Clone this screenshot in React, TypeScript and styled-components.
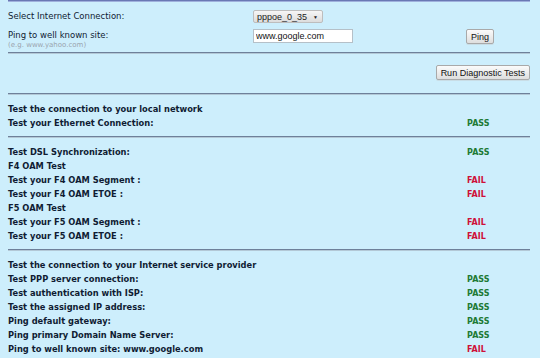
import styled, { createGlobalStyle } from "styled-components";

const GlobalStyle = createGlobalStyle`
  html, body {
    margin: 0;
    padding: 0;
    background: #cdeefc;
  }
  body {
    font-family: "DejaVu Sans", Verdana, sans-serif;
    color: #101c33;
  }
`;

type Status = "PASS" | "FAIL";

interface TestRow {
  label: string;
  status?: Status;
}

const groups: TestRow[][] = [
  [
    { label: "Test the connection to your local network" },
    { label: "Test your Ethernet Connection:", status: "PASS" },
  ],
  [
    { label: "Test DSL Synchronization:", status: "PASS" },
    { label: "F4 OAM Test" },
    { label: "Test your F4 OAM Segment :", status: "FAIL" },
    { label: "Test your F4 OAM ETOE :", status: "FAIL" },
    { label: "F5 OAM Test" },
    { label: "Test your F5 OAM Segment :", status: "FAIL" },
    { label: "Test your F5 OAM ETOE :", status: "FAIL" },
  ],
  [
    { label: "Test the connection to your Internet service provider" },
    { label: "Test PPP server connection:", status: "PASS" },
    { label: "Test authentication with ISP:", status: "PASS" },
    { label: "Test the assigned IP address:", status: "PASS" },
    { label: "Ping default gateway:", status: "PASS" },
    { label: "Ping primary Domain Name Server:", status: "PASS" },
    { label: "Ping to well known site: www.google.com", status: "FAIL" },
  ],
];

export default function App() {
  return (
    <>
      <GlobalStyle />
      <Page>
        <Rule $tone="top" />
        <Settings>
          <FieldLabel>Select Internet Connection:</FieldLabel>
          <SelectBox>
            pppoe_0_35
            <Caret>▼</Caret>
          </SelectBox>
          <span />
          <FieldLabel>
            Ping to well known site:
            <Hint>(e.g. www.yahoo.com)</Hint>
          </FieldLabel>
          <TextInput defaultValue="www.google.com" />
          <Button>Ping</Button>
        </Settings>
        <Rule />
        <Actions>
          <Button>Run Diagnostic Tests</Button>
        </Actions>
        <Rule />
        {groups.map((rows, gi) => (
          <div key={gi}>
            <Group>
              {rows.map((row, ri) => (
                <Row key={ri}>
                  <Label>{row.label}</Label>
                  {row.status && <Result $status={row.status}>{row.status}</Result>}
                </Row>
              ))}
            </Group>
            {gi < groups.length - 1 && <Rule />}
          </div>
        ))}
      </Page>
    </>
  );
}

const Page = styled.div`
  margin: 0 10px 0 8px;
`;

const Rule = styled.div<{ $tone?: "top" }>`
  height: 1px;
  background: ${(p) => (p.$tone === "top" ? "#6a78b4" : "#6e809a")};
  border-bottom: 1px solid ${(p) => (p.$tone === "top" ? "#9fb0dc" : "#b3c8d6")};
`;

const Settings = styled.div`
  display: grid;
  grid-template-columns: 245px 213px auto;
  align-items: start;
  row-gap: 6px;
  padding: 8px 0 2px;
`;

const FieldLabel = styled.div`
  font-size: 8.5px;
  line-height: 12px;
  display: flex;
  flex-direction: column;
`;

const Hint = styled.span`
  font-size: 7px;
  line-height: 9px;
  color: #9aa4ae;
`;

const SelectBox = styled.div`
  justify-self: start;
  box-sizing: border-box;
  display: flex;
  align-items: center;
  gap: 6px;
  height: 13px;
  padding: 0 4px 0 3px;
  font-family: "Liberation Sans", Arial, sans-serif;
  font-size: 9px;
  color: #222;
  background: linear-gradient(#f6f6f6, #dcdcdc);
  border: 1px solid #bdbdbd;
  border-radius: 2px;
`;

const Caret = styled.span`
  font-size: 5px;
  color: #222;
`;

const TextInput = styled.input`
  justify-self: start;
  box-sizing: border-box;
  width: 100px;
  height: 14px;
  padding: 0 2px;
  font-family: "Liberation Sans", Arial, sans-serif;
  font-size: 9px;
  color: #111;
  background: #fff;
  border: 1px solid #b5c0c8;
  outline: none;
`;

const Button = styled.button`
  justify-self: start;
  height: 15px;
  padding: 0 4px;
  font-family: "Liberation Sans", Arial, sans-serif;
  font-size: 9px;
  color: #111;
  background: linear-gradient(#fbfbfb, #dedede);
  border: 1px solid #a9a9a9;
  border-radius: 2px;
  box-shadow: 0 1px 0 #c9dde6;
`;

const Actions = styled.div`
  display: flex;
  justify-content: flex-end;
  padding: 11px 0 13px;
`;

const Group = styled.div`
  display: flex;
  flex-direction: column;
  padding: 7px 0 6px;
`;

const Row = styled.div`
  display: grid;
  grid-template-columns: 459px auto;
  height: 14px;
  align-items: center;
`;

const Label = styled.span`
  font-size: 8.3px;
  font-weight: bold;
  white-space: nowrap;
`;

const Result = styled.span<{ $status: Status }>`
  font-size: 8px;
  font-weight: bold;
  color: ${(p) => (p.$status === "PASS" ? "#1d7a34" : "#cf1038")};
`;
